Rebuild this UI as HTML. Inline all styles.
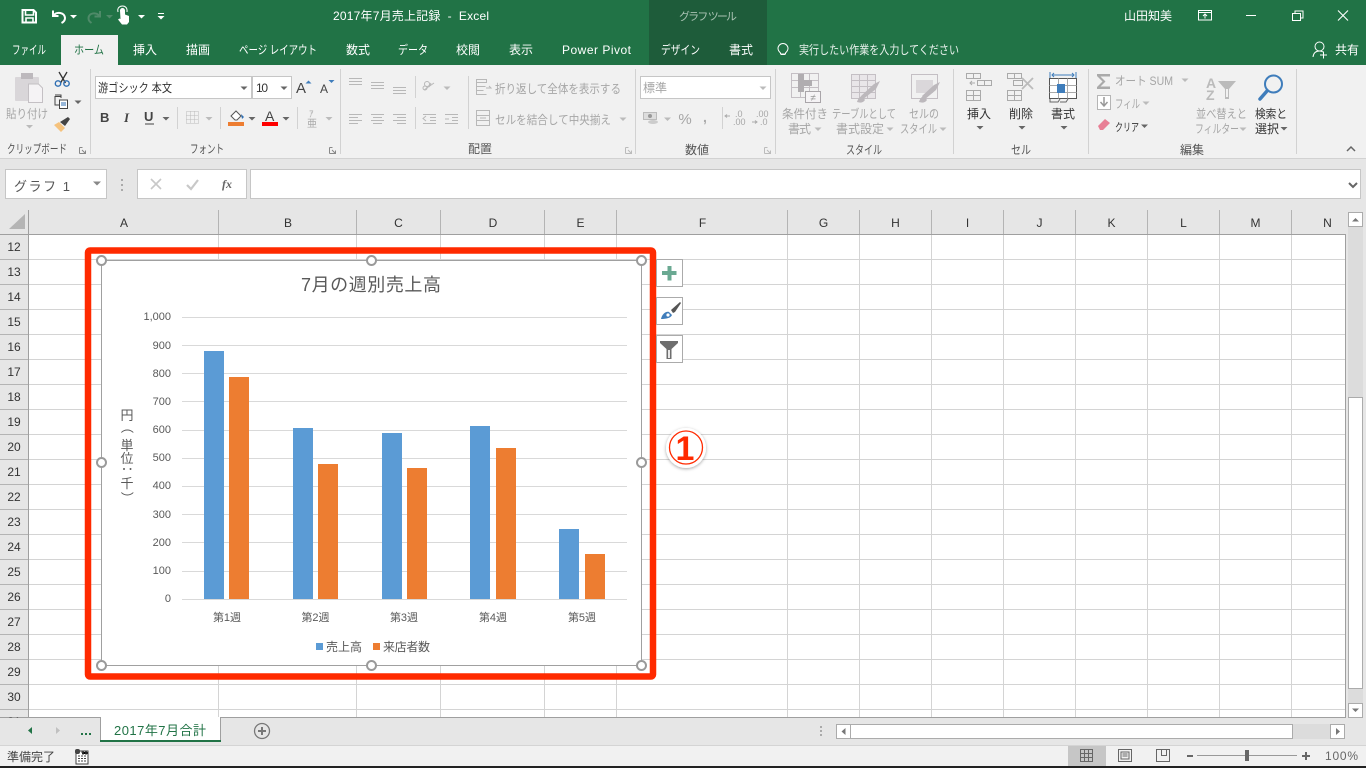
<!DOCTYPE html>
<html lang="ja"><head><meta charset="utf-8"><title>2017年7月売上記録 - Excel</title>
<style>
html,body{margin:0;padding:0;width:1366px;height:768px;overflow:hidden;background:#e6e6e6}
svg{display:block;position:absolute;left:0;top:0}
text{font-family:"Liberation Sans","Noto Sans CJK JP",sans-serif;font-size:12px;fill:#444;white-space:pre}
.w text{fill:#fff}
.g text{fill:#a6a6a6}
.d text{fill:#444}
.c{text-anchor:middle}
.ch text{fill:#595959}
.hd text{fill:#333;text-anchor:middle}
</style></head><body>
<svg width="1366" height="768" viewBox="0 0 1366 768" xmlns="http://www.w3.org/2000/svg">
<defs>
<path id="car" d="M0 0h7l-3.500 3.500z"/>
<filter id="gl" x="-30%" y="-30%" width="160%" height="160%"><feDropShadow dx="0" dy="1" stdDeviation="1.500" flood-color="#000" flood-opacity=".35"/></filter>
</defs>
<!-- title bar -->
<rect width="1366" height="65" fill="#217346"/>
<rect x="649" width="118" height="65" fill="#1e5c3a"/>
<rect x="61" y="35" width="57" height="30" fill="#f1f1f1"/>
<g fill="none" stroke="#fff" stroke-width="1.500">
<path d="M22.500 10h11l2.500 2.500v10h-13.500z" stroke-width="2"/>
<path d="M25.500 10v5h8v-5M26 23v-5h7v5" stroke-width="1.600"/>
<path d="M53 10.500v5.500h5.500" stroke-width="2"/><path d="M53.500 15.500c3-4 11-3.500 11.500 2.500 0 2.500-1.500 4-3.500 5" stroke-width="2"/>
<g stroke="#4f8a69"><path d="M100 11v5.500h-5.500" stroke-width="2"/><path d="M99.500 16c-3-4-10.500-3.500-11 2 0 2.500 1 3.500 3 5" stroke-width="2"/></g>
</g>
<path d="M120 10.500a2.500 2.500 0 0 1 5 0v4l4 1.500v6l-2 2.500h-5l-4-5 1.500-1 1 .5z" fill="#fff"/><path d="M118 12c-1-4 1.500-6 4.500-6s5 2 4.500 6" fill="none" stroke="#fff"/>
<g fill="#fff"><use href="#car" x="70" y="15"/><use href="#car" x="138" y="15"/><rect x="158" y="13" width="6" height="1"/><use href="#car" x="157.500" y="16"/></g>
<use href="#car" x="106" y="15" fill="#4f8a69"/>
<g class="w">
<text x="333" y="20" textLength="156" lengthAdjust="spacing">2017年7月売上記録  -  Excel</text>
<text x="12" y="54" textLength="34" lengthAdjust="spacingAndGlyphs">ファイル</text>
<text x="133" y="54" textLength="24">挿入</text><text x="186" y="54" textLength="24">描画</text>
<text x="239" y="54" textLength="78" lengthAdjust="spacingAndGlyphs">ページ レイアウト</text><text x="346" y="54" textLength="24">数式</text>
<text x="398" y="54" textLength="30" lengthAdjust="spacingAndGlyphs">データ</text><text x="456" y="54" textLength="24">校閲</text>
<text x="509" y="54" textLength="24">表示</text><text x="562" y="54" textLength="69">Power Pivot</text>
<text x="661" y="54" textLength="39" lengthAdjust="spacingAndGlyphs">デザイン</text><text x="729" y="54" textLength="24">書式</text>
<text x="799" y="54" textLength="160" lengthAdjust="spacingAndGlyphs" opacity=".9">実行したい作業を入力してください</text>
<text x="1124" y="20" textLength="48">山田知美</text><text x="1335" y="54" textLength="24">共有</text>
</g>
<text x="679" y="20" textLength="58" lengthAdjust="spacing" style="fill:#a9c2b3;font-size:11px">グラフ ツール</text>
<text x="74" y="54" textLength="30" lengthAdjust="spacingAndGlyphs" style="fill:#217346">ホーム</text>
<g fill="none" stroke="#fff">
<path d="M781.500 54.500h4M786 53c2.500-2.500 2.500-3.500 2.500-4.500a5 5 0 0 0-10 0c0 1 .5 2.500 2.500 4.500v1h5z" transform="translate(-.5 0)"/>
<path d="M1198.500 10.500h13v9.500h-13zM1198.500 12.500h13M1205 18.500v-4M1203 16l2-2 2 2"/>
<path d="M1246 15.500h10"/><path d="M1292.500 13.500h8v7h-8zM1295 13.500v-2.500h8v7h-2.500"/>
<path d="M1338 10.500l10 10M1348 10.500l-10 10" stroke-width="1.100"/>
<circle cx="1319.500" cy="46.500" r="4.500"/><path d="M1313 57c.5-4 3-6 6.500-6 1.500 0 2.500.3 3.500 1M1320 55h7M1323.500 51.500v7"/>
</g>
<!-- ribbon -->
<rect y="65" width="1366" height="93" fill="#f1f1f1"/>
<rect y="158" width="1366" height="1" fill="#d2d2d2"/>
<g fill="#d2d2d2"><rect x="90" y="69" width="1" height="85"/><rect x="340" y="69" width="1" height="85"/><rect x="635" y="69" width="1" height="85"/><rect x="775" y="69" width="1" height="85"/><rect x="953" y="69" width="1" height="85"/><rect x="1088" y="69" width="1" height="85"/><rect x="1296" y="69" width="1" height="85"/>
<rect x="177" y="107" width="1" height="22"/><rect x="220" y="107" width="1" height="22"/><rect x="297" y="107" width="1" height="22"/><rect x="415" y="76" width="1" height="22"/><rect x="415" y="107" width="1" height="22"/><rect x="468" y="76" width="1" height="53"/><rect x="722" y="107" width="1" height="22"/></g>
<!-- font boxes -->
<g fill="#fff" stroke="#c6c6c6"><rect x="95.500" y="76.500" width="156" height="22"/><rect x="252.500" y="76.500" width="39" height="22"/><rect x="640.500" y="76.500" width="130" height="22"/></g>
<g class="g"><text x="6" y="118" textLength="42" lengthAdjust="spacingAndGlyphs">貼り付け</text></g>
<g class="d" font-size="12">
<text x="7" y="153" textLength="60" lengthAdjust="spacingAndGlyphs" style="fill:#555">クリップボード</text>
<text x="190" y="153" textLength="34" lengthAdjust="spacingAndGlyphs" style="fill:#555">フォント</text><text x="468" y="153" textLength="24" style="fill:#555">配置</text>
<text x="685" y="154" textLength="24" style="fill:#555">数値</text><text x="846" y="154" textLength="36" lengthAdjust="spacingAndGlyphs" style="fill:#555">スタイル</text>
<text x="1011" y="154" textLength="20" lengthAdjust="spacingAndGlyphs" style="fill:#555">セル</text><text x="1180" y="154" textLength="24" style="fill:#555">編集</text>
<text x="98" y="92" textLength="74" lengthAdjust="spacingAndGlyphs" style="font-size:12px;fill:#333">游ゴシック 本文</text>
<text x="256" y="92" textLength="12" style="fill:#333">10</text>
<text x="967" y="118" textLength="24" style="fill:#333">挿入</text><text x="1009" y="118" textLength="24" style="fill:#333">削除</text><text x="1051" y="118" textLength="24" style="fill:#333">書式</text>
<text x="1115" y="131" textLength="24" lengthAdjust="spacingAndGlyphs" style="fill:#333;font-size:11px">クリア</text>
<text x="1255" y="118" textLength="32" lengthAdjust="spacingAndGlyphs" style="fill:#333">検索と</text><text x="1255" y="133" textLength="24" style="fill:#333">選択</text>
</g>
<g class="g">
<text x="495" y="93" textLength="126" lengthAdjust="spacingAndGlyphs">折り返して全体を表示する</text><text x="495" y="124" textLength="116" lengthAdjust="spacingAndGlyphs">セルを結合して中央揃え</text>
<text x="643" y="92" textLength="24">標準</text>
<text x="782" y="118" textLength="46" lengthAdjust="spacingAndGlyphs">条件付き</text><text x="788" y="133" textLength="23">書式</text>
<text x="832" y="118" textLength="64" lengthAdjust="spacingAndGlyphs">テーブルとして</text><text x="836" y="133" textLength="48">書式設定</text>
<text x="909" y="118" textLength="30" lengthAdjust="spacingAndGlyphs">セルの</text><text x="900" y="133" textLength="37" lengthAdjust="spacingAndGlyphs">スタイル</text>
<text x="1115" y="85" textLength="58" lengthAdjust="spacingAndGlyphs">オート SUM</text><text x="1115" y="108" textLength="25" lengthAdjust="spacingAndGlyphs">フィル</text>
<text x="1196" y="118" textLength="51" lengthAdjust="spacingAndGlyphs">並べ替えと</text><text x="1195" y="133" textLength="44" lengthAdjust="spacingAndGlyphs">フィルター</text>
<text x="685" y="124" class="c" style="font-size:15px;text-anchor:middle">%</text>
</g>
<g fill="#666"><use href="#car" x="240.500" y="86.500"/><use href="#car" x="280.500" y="86.500"/><use href="#car" x="976.500" y="126"/><use href="#car" x="1018.500" y="126"/><use href="#car" x="1060.500" y="126"/><use href="#car" x="1141" y="124.500"/><use href="#car" x="1280.500" y="127"/><use href="#car" x="162.500" y="117"/><use href="#car" x="248.500" y="117"/><use href="#car" x="282.500" y="117"/><use href="#car" x="74.500" y="100.500"/></g>
<g fill="#bbb"><use href="#car" x="26" y="125"/><use href="#car" x="205.500" y="117"/><use href="#car" x="325.500" y="117"/><use href="#car" x="443.500" y="86.500"/><use href="#car" x="619.500" y="117.500"/><use href="#car" x="759.500" y="86.500"/><use href="#car" x="664" y="117.500"/><use href="#car" x="814.500" y="127.500"/><use href="#car" x="886.500" y="127.500"/><use href="#car" x="939.500" y="127.500"/><use href="#car" x="1181.500" y="78.500"/><use href="#car" x="1142.500" y="101.500"/><use href="#car" x="1239.500" y="127.500"/></g>
<!-- clipboard -->
<rect x="15" y="77" width="24" height="24" rx="1" fill="#d9d6d9"/><rect x="21" y="73" width="12" height="6" fill="#bdb9bd"/><path d="M28.500 84h10l4 4v14.500h-14z" fill="#f5f3f5" stroke="#c4c0c4"/>
<g fill="none" stroke="#333"><path d="M59 72l6.500 11M67 72l-6.500 11" stroke-width="1.300"/></g><g fill="none" stroke="#2f6fb3" stroke-width="1.400"><circle cx="58" cy="83.500" r="2.700"/><circle cx="66.500" cy="83.500" r="2.700"/></g>
<path d="M54.500 96.500h7M55 96v9h4" fill="none" stroke="#444"/><path d="M59.500 100h8v8.500h-8z" fill="#fff" stroke="#444"/><path d="M61 103h5M61 105h5" stroke="#2f6fb3"/><path d="M55 95h6v3" fill="none" stroke="#444"/>
<path d="M54 125l5-3 6 6-4 4z" fill="#f5c27d"/><path d="M60 122l8-5 2 2-5 7z" fill="#444"/>
<!-- font glyphs -->
<text x="296" y="93" style="font-size:15px;fill:#444">A</text><path d="M305.500 83.500l3-3 3 3z" fill="#3f7dbb"/>
<text x="320" y="93" style="font-size:12px;fill:#444">A</text><path d="M328.500 80h6l-3 3z" fill="#3f7dbb"/>
<text x="100" y="122" style="font-size:13px;font-weight:bold;fill:#444">B</text>
<text x="124" y="122" style="font-size:13px;font-style:italic;font-weight:bold;fill:#444;font-family:'Liberation Serif',serif">I</text>
<text x="144" y="121" style="font-size:13px;font-weight:bold;fill:#444">U</text><rect x="145" y="123.500" width="9" height="1" fill="#444"/>
<path d="M186.500 111.500h12v12h-12zM190.500 111.500v12M194.500 111.500v12M186.500 115.500h12M186.500 119.500h12" fill="none" stroke="#bbb" stroke-dasharray="1 1"/>
<path d="M231 116l5-5 5 5-4 4h-2z" fill="#fff" stroke="#555"/><path d="M241 114l3 3-2 2z" fill="#2f6fb3"/><rect x="228" y="122" width="16" height="4" fill="#ed7d31"/>
<text x="265" y="121" style="font-size:14px;fill:#444">A</text><rect x="262" y="122" width="16" height="4" fill="#f00"/>
<text x="309" y="117" style="font-size:9px;fill:#aaa">ｱ</text><text x="307" y="127" style="font-size:10px;fill:#aaa">亜</text>
<!-- align -->
<g stroke="#b8b8b8" fill="none">
<path d="M349 78.500h13M349 81.500h13M349 84.500h13M371 82.500h13M371 85.500h13M371 88.500h13M393 87.500h13M393 90.500h13M393 93.500h13"/>
<path d="M349 114.500h13M349 117.500h9M349 120.500h13M349 123.500h9M371 114.500h13M373 117.500h9M371 120.500h13M373 123.500h9M393 114.500h13M397 117.500h9M393 120.500h13M397 123.500h9"/>
<path d="M423 114.500h13M430 117.500h6M430 120.500h6M423 123.500h13M426 116l-3 2.500 3 2.500M445 114.500h13M445 123.500h13M452 117.500h6M452 120.500h6M445 119h4"/>
<path d="M424 90l10-7M429 87l2-4"/><circle cx="427" cy="84" r="2.500"/><circle cx="425" cy="88" r="2"/>
<path d="M476.500 79.500h10v3h-10zM476.500 82.500v12h10M476.500 86.500h9M476.500 90.500h7M486 88h5l-2-2"/>
<path d="M476.500 110.500h13v15h-13zM476.500 115.500h13M476.500 120.500h13M480 118h6"/>
</g>
<!-- number -->
<path d="M643.500 112.500h13v7h-13z" fill="#ddd" stroke="#bbb"/><ellipse cx="653" cy="122" rx="5" ry="2" fill="#ccc"/><circle cx="650" cy="116" r="2" fill="#999"/>
<text x="703" y="122" style="font-size:14px;font-weight:bold;fill:#aaa">,</text>
<g class="g"><text x="735" y="117" style="font-size:9px">.0</text><text x="733" y="125" style="font-size:9px">.00</text><text x="756" y="117" style="font-size:9px">.00</text><text x="760" y="125" style="font-size:9px">.0</text></g>
<path d="M730 116h-4M727 114.500l-2 1.500 2 1.500M752 122h5M755 120.500l2 1.500-2 1.500" fill="none" stroke="#aaa"/>
<!-- styles icons -->
<g fill="none" stroke="#c4bfc4">
<path d="M791.500 73.500h27v24h-27zM791.500 80.500h27M791.500 87.500h27M800.500 73.500v24M809.500 73.500v24"/></g>
<path d="M798 74h6v6h8v6h-8v6h-6z" fill="#b0adb0"/><rect x="805.500" y="91.500" width="15" height="11" fill="#f5f3f5" stroke="#a9a5a9"/><text x="813" y="101" style="font-size:10px;fill:#999;text-anchor:middle">≠</text>
<g fill="none" stroke="#c4bfc4"><rect x="851.500" y="74.500" width="24" height="24" fill="#e9e6e9"/><path d="M851.500 80.500h24M851.500 86.500h24M851.500 92.500h24M859.500 74.500v24M867.500 74.500v24"/></g>
<path d="M862 100l14-11 4-8-6 3-13 12zM857 102c3 1 6 1 8-2l-3-4c-3 1-4 3-5 6z" fill="#bcb8bc"/>
<g fill="none" stroke="#c4bfc4"><rect x="911.500" y="74.500" width="26" height="24"/></g><rect x="916" y="80" width="17" height="13" fill="#dad7da"/>
<path d="M924 100l12-10 4-8-6 3-12 11zM919 102c3 1 6 1 8-2l-3-4c-3 1-4 3-5 6z" fill="#bcb8bc"/>
<!-- cells -->
<g fill="none" stroke="#aaa">
<path d="M966.500 73.500h14v5h-14zM973.500 73.500v5M966.500 90.500h14v10h-14zM973.500 90.500v10M966.500 95.500h14M977.500 80.500h14v5h-14zM984.500 80.500v5M975 83h-5M972 81l-2 2 2 2"/>
<path d="M1007.500 73.500h14v5h-14zM1014.500 73.500v5M1007.500 90.500h14v10h-14zM1014.500 90.500v10M1007.500 95.500h14M1013.500 80.500h9v5h-9z"/>
<path d="M1022 78l11 11M1033 78l-11 11" stroke-width="1.800" stroke="#bbb"/>
</g>
<rect x="1049.500" y="78.500" width="27" height="20" fill="#fff" stroke="#555"/><path d="M1058.500 78.500v20M1067.500 78.500v20M1049.500 85.500h27M1049.500 92.500h27" stroke="#aaa"/>
<rect x="1057" y="84" width="8" height="9" fill="#3f7dbb"/><path d="M1050 72v6M1076 72v6M1052 75h22M1054 73l-2 2 2 2M1072 73l2 2-2 2" fill="none" stroke="#3f7dbb"/><path d="M1050 99v3h8l2-3M1060 102h6l2-3" fill="none" stroke="#666"/>
<!-- edit -->
<path d="M1097 74h13v2.500h-9.500l5 5-5 5h9.500v2.500h-13v-2l5.500-5.500-5.500-5.500z" fill="#aaa"/>
<rect x="1097.500" y="95.500" width="13" height="14" fill="#fff" stroke="#b5b5b5"/><path d="M1104 97v8M1100.500 102l3.500 4 3.500-4" fill="none" stroke="#999" stroke-width="1.500"/>
<path d="M1098 126l7-7 5 4-7 7h-3z" fill="#e87f95"/>
<text x="1206" y="88" style="font-size:14px;font-weight:bold;fill:#bbb">A</text><text x="1206" y="100" style="font-size:14px;font-weight:bold;fill:#bbb">Z</text>
<path d="M1218 81h18l-7 8v10h-4v-10z" fill="#bbb"/><path d="M1226 89v8h2v-8" fill="#f1f1f1"/>
<circle cx="1273.500" cy="84" r="8.500" fill="none" stroke="#3f7dbb" stroke-width="2"/><path d="M1267 91l-7 8" stroke="#3f7dbb" stroke-width="3.500" stroke-linecap="round"/>
<path d="M1347 151l4-4 4 4" fill="none" stroke="#666" stroke-width="1.500"/>
<!-- launchers -->
<g fill="none" stroke="#888"><path d="M79.500 147.500h3M79.500 147.500v6M79.500 153.500h6v-3M82 150l3 3"/><path d="M329.500 147.500h3M329.500 147.500v6M329.500 153.500h6v-3M332 150l3 3"/></g>
<g fill="none" stroke="#bbb"><path d="M625.500 147.500h3M625.500 147.500v6M625.500 153.500h6v-3M628 150l3 3"/><path d="M764.500 147.500h3M764.500 147.500v6M764.500 153.500h6v-3M767 150l3 3"/></g>
<!-- formula bar -->
<rect y="159" width="1366" height="51" fill="#e6e6e6"/>
<g fill="#fff" stroke="#c6c6c6"><rect x="5.500" y="169.500" width="101" height="29"/><rect x="137.500" y="169.500" width="109" height="29"/><rect x="250.500" y="169.500" width="1110" height="29"/></g>
<text x="14" y="191" textLength="56" style="font-size:13px;fill:#555">グラフ 1</text>
<path d="M93 181.500h8l-4 4z" fill="#888"/>
<g fill="#aaa"><rect x="121" y="179" width="2" height="2"/><rect x="121" y="184" width="2" height="2"/><rect x="121" y="189" width="2" height="2"/></g>
<path d="M151 179l10 10M161 179l-10 10" stroke="#c8c8c8" stroke-width="1.600"/><path d="M187 185l4 4 7-9" fill="none" stroke="#c8c8c8" stroke-width="2.200"/>
<text x="222" y="188" style="font-family:'Liberation Serif',serif;font-style:italic;font-weight:bold;font-size:12px;fill:#666">fx</text>
<path d="M1349 183l4 4 4-4" fill="none" stroke="#666" stroke-width="2"/>
<!-- sheet -->
<rect x="29" y="235" width="1316" height="482" fill="#fff"/>
<rect y="210" width="1366" height="25" fill="#e6e6e6"/>
<rect y="235" width="28" height="482" fill="#e6e6e6"/>
<rect x="1346" y="210" width="20" height="507" fill="#e6e6e6"/>
<path d="M25 214v15h-16z" fill="#b5b5b5"/>
<g stroke="#d4d4d4"><path d="M29 259.500h1316M29 284.500h1316M29 309.500h1316M29 334.500h1316M29 359.500h1316M29 384.500h1316M29 409.500h1316M29 434.500h1316M29 459.500h1316M29 484.500h1316M29 509.500h1316M29 534.500h1316M29 559.500h1316M29 584.500h1316M29 609.500h1316M29 634.500h1316M29 659.500h1316M29 684.500h1316M29 709.500h1316"/>
<path d="M218.500 235v482M356.500 235v482M440.500 235v482M544.500 235v482M616.500 235v482M787.500 235v482M859.500 235v482M931.500 235v482M1003.500 235v482M1075.500 235v482M1147.500 235v482M1219.500 235v482M1291.500 235v482"/></g>
<g stroke="#b4b4b4"><path d="M0 259.500h28M0 284.500h28M0 309.500h28M0 334.500h28M0 359.500h28M0 384.500h28M0 409.500h28M0 434.500h28M0 459.500h28M0 484.500h28M0 509.500h28M0 534.500h28M0 559.500h28M0 584.500h28M0 609.500h28M0 634.500h28M0 659.500h28M0 684.500h28M0 709.500h28"/>
<path d="M218.500 210v24M356.500 210v24M440.500 210v24M544.500 210v24M616.500 210v24M787.500 210v24M859.500 210v24M931.500 210v24M1003.500 210v24M1075.500 210v24M1147.500 210v24M1219.500 210v24M1291.500 210v24"/></g>
<path d="M0 234.500h1345M28.500 210v507M0 717.500h1346M1345.500 234v484" stroke="#9f9f9f" fill="none"/>
<g class="hd" style="font-size:13px">
<text x="124" y="227">A</text><text x="288" y="227">B</text><text x="398.500" y="227">C</text><text x="493" y="227">D</text><text x="580.500" y="227">E</text><text x="702.500" y="227">F</text><text x="823.500" y="227">G</text><text x="895.500" y="227">H</text><text x="967.500" y="227">I</text><text x="1039.500" y="227">J</text><text x="1111.500" y="227">K</text><text x="1183.500" y="227">L</text><text x="1255.500" y="227">M</text><text x="1327.500" y="227">N</text>
<text x="14" y="251">12</text><text x="14" y="276">13</text><text x="14" y="301">14</text><text x="14" y="326">15</text><text x="14" y="351">16</text><text x="14" y="376">17</text><text x="14" y="401">18</text><text x="14" y="426">19</text><text x="14" y="451">20</text><text x="14" y="476">21</text><text x="14" y="501">22</text><text x="14" y="526">23</text><text x="14" y="551">24</text><text x="14" y="576">25</text><text x="14" y="601">26</text><text x="14" y="626">27</text><text x="14" y="651">28</text><text x="14" y="676">29</text><text x="14" y="701">30</text><text x="14" y="726">31</text>
</g>
<!-- scrollbar -->
<rect x="1348" y="212" width="15" height="505" fill="#dcdcdc"/>
<g fill="#fff" stroke="#ababab"><rect x="1348.500" y="212.500" width="14" height="14"/><rect x="1348.500" y="397.500" width="14" height="291"/><rect x="1348.500" y="703.500" width="14" height="14"/></g>
<path d="M1352 221.500l3.500-3.500 3.500 3.500zM1352 708.500h7l-3.500 3.500z" fill="#777"/>
<!-- chart -->
<rect x="88" y="250.500" width="565" height="426" rx="2" fill="none" stroke="#ff2a00" stroke-width="6.500"/>
<rect x="101.500" y="260.500" width="540" height="405" fill="#fff" stroke="#a0a0a0"/>
<g stroke="#d9d9d9"><path d="M182 317.500h445M182 345.500h445M182 373.500h445M182 401.500h445M182 430.500h445M182 458.500h445M182 486.500h445M182 514.500h445M182 542.500h445M182 571.500h445M182 599.500h445"/></g>
<g fill="#5b9bd5"><rect x="204" y="351" width="20" height="248"/><rect x="293" y="428" width="20" height="171"/><rect x="382" y="433" width="20" height="166"/><rect x="470" y="426" width="20" height="173"/><rect x="559" y="529" width="20" height="70"/><rect x="316" y="643" width="7" height="7"/></g>
<g fill="#ed7d31"><rect x="229" y="377" width="20" height="222"/><rect x="318" y="464" width="20" height="135"/><rect x="407" y="468" width="20" height="131"/><rect x="496" y="448" width="20" height="151"/><rect x="585" y="554" width="20" height="45"/><rect x="373" y="643" width="7" height="7"/></g>
<g class="ch">
<text x="301" y="291" textLength="140" style="font-size:18px">7月の週別売上高</text>
<g style="text-anchor:end"><text x="171" y="320" style="font-size:11px">1,000</text><text x="171" y="349" style="font-size:11px">900</text><text x="171" y="377" style="font-size:11px">800</text><text x="171" y="405" style="font-size:11px">700</text><text x="171" y="433" style="font-size:11px">600</text><text x="171" y="461" style="font-size:11px">500</text><text x="171" y="489" style="font-size:11px">400</text><text x="171" y="518" style="font-size:11px">300</text><text x="171" y="546" style="font-size:11px">200</text><text x="171" y="574" style="font-size:11px">100</text><text x="171" y="602" style="font-size:11px">0</text></g>
<g style="text-anchor:middle"><text x="227" y="621" style="font-size:11px">第1週</text><text x="315.500" y="621" style="font-size:11px">第2週</text><text x="404" y="621" style="font-size:11px">第3週</text><text x="493" y="621" style="font-size:11px">第4週</text><text x="582" y="621" style="font-size:11px">第5週</text></g>
<text x="326" y="651" textLength="36">売上高</text><text x="383" y="651" textLength="47">来店者数</text>
<g style="text-anchor:middle;font-size:13px">
<text x="127" y="420" style="font-size:13px">円</text>
<text transform="translate(122.500 427) rotate(90)" style="font-size:13px">（</text>
<text x="127" y="450" style="font-size:13px">単</text>
<text x="127" y="463" style="font-size:13px">位</text>
<text transform="translate(122.500 469) rotate(90)" style="font-size:13px">：</text>
<text x="127" y="488" style="font-size:13px">千</text>
<text transform="translate(122.500 498) rotate(90)" style="font-size:13px">）</text>
</g>
</g>
<g fill="#fff" stroke="#9a9a9a" stroke-width="2"><circle cx="101.500" cy="260.500" r="4.500"/><circle cx="371.500" cy="260.500" r="4.500"/><circle cx="641.500" cy="260.500" r="4.500"/><circle cx="101.500" cy="462.500" r="4.500"/><circle cx="641.500" cy="462.500" r="4.500"/><circle cx="101.500" cy="665.500" r="4.500"/><circle cx="371.500" cy="665.500" r="4.500"/><circle cx="641.500" cy="665.500" r="4.500"/></g>
<!-- chart side buttons -->
<g fill="#fff" stroke="#ababab"><rect x="656.500" y="259.500" width="26" height="27"/><rect x="656.500" y="297.500" width="26" height="27"/><rect x="656.500" y="335.500" width="26" height="27"/></g>
<path d="M667.500 266h4v5h5v4h-5v5.500h-4v-5.500h-5.500v-4h5.500z" fill="#6aa992"/>
<path d="M671 310l9-8 1 1-6 9-2 1z" fill="#555"/><path d="M661 319c1-5 5-8 8-7l3 3c-1 3-6 4-11 4z" fill="#3f7dbb"/><circle cx="668" cy="315" r="1.600" fill="#fff"/>
<path d="M660 341h18v2l-6.500 6v10h-5v-10l-6.500-6z" fill="#6e6e6e"/><path d="M668 350h2v8h-2z" fill="#e8e8e8"/>
<!-- callout 1 -->
<circle cx="686" cy="448" r="20" fill="#fff" filter="url(#gl)"/>
<circle cx="686" cy="447.500" r="16.500" fill="#fff" stroke="#ff2a00" stroke-width="1.300"/>
<text x="685" y="460" style="text-anchor:middle;font-size:34px;font-weight:bold;fill:#ff2a00">1</text>
<!-- sheet tabs -->
<rect y="718" width="1366" height="27" fill="#e6e6e6"/>
<path d="M100.500 717.500v23M220.500 717.500v23" stroke="#9f9f9f"/>
<rect x="101" y="717" width="119" height="23" fill="#fff"/><rect x="100" y="740" width="121" height="2" fill="#217346"/>
<text x="114" y="735" textLength="92" style="font-size:13px;fill:#217346">2017年7月合計</text>
<path d="M32 727v7l-4-3.500z" fill="#217346"/><path d="M56 727v7l4-3.500z" fill="#c0c0c0"/>
<g fill="#217346"><rect x="81" y="733" width="2" height="2"/><rect x="85" y="733" width="2" height="2"/><rect x="89" y="733" width="2" height="2"/></g>
<circle cx="262" cy="731" r="7.500" fill="none" stroke="#777" stroke-width="1.300"/><path d="M262 727v8M258 731h8" stroke="#777" stroke-width="2"/>
<g fill="#aaa"><rect x="820" y="726" width="2" height="2"/><rect x="820" y="730" width="2" height="2"/><rect x="820" y="734" width="2" height="2"/></g>
<rect x="836" y="724" width="509" height="15" fill="#dcdcdc"/>
<g fill="#fff" stroke="#ababab"><rect x="836.500" y="724.500" width="14" height="14"/><rect x="850.500" y="724.500" width="442" height="14"/><rect x="1330.500" y="724.500" width="14" height="14"/></g>
<path d="M845.500 728v7l-4-3.500zM1336 728v7l4-3.500z" fill="#777"/>
<!-- status bar -->
<rect y="745" width="1366" height="21" fill="#f1f1f1"/><rect y="745" width="1366" height="1" fill="#d4d4d4"/>
<rect y="766" width="1366" height="2" fill="#222"/>
<text x="7" y="761" textLength="48" style="fill:#444">準備完了</text>
<path d="M76 751h12v13h-12z" fill="#fff" stroke="#444"/><rect x="75" y="749" width="5" height="5" rx="2" fill="#444"/><path d="M82 752h6v2h-6zM78 756h9M78 758.500h9M78 761h9" stroke="#444" stroke-dasharray="2 1"/>
<rect x="1068" y="746" width="38" height="20" fill="#c6c6c6"/>
<g fill="none" stroke="#666"><path d="M1080.500 749.500h12v12h-12zM1084.500 749.500v12M1088.500 749.500v12M1080.500 753.500h12M1080.500 757.500h12"/><path d="M1118.500 749.500h13v12h-13zM1121 752h8v7h-8zM1122.500 754h5M1122.500 756h5"/><path d="M1156.500 749.500h13v12h-13zM1161.500 749.500v6h5v-6"/></g>
<path d="M1197 755.500h100" stroke="#999" fill="none"/><rect x="1187" y="755" width="6" height="2" fill="#666"/><rect x="1245" y="750" width="4" height="11" fill="#666"/><path d="M1302 756h8M1306 752v8" stroke="#666" stroke-width="2"/>
<text x="1325" y="760" textLength="33" style="fill:#666">100%</text>
</svg>
</body></html>
